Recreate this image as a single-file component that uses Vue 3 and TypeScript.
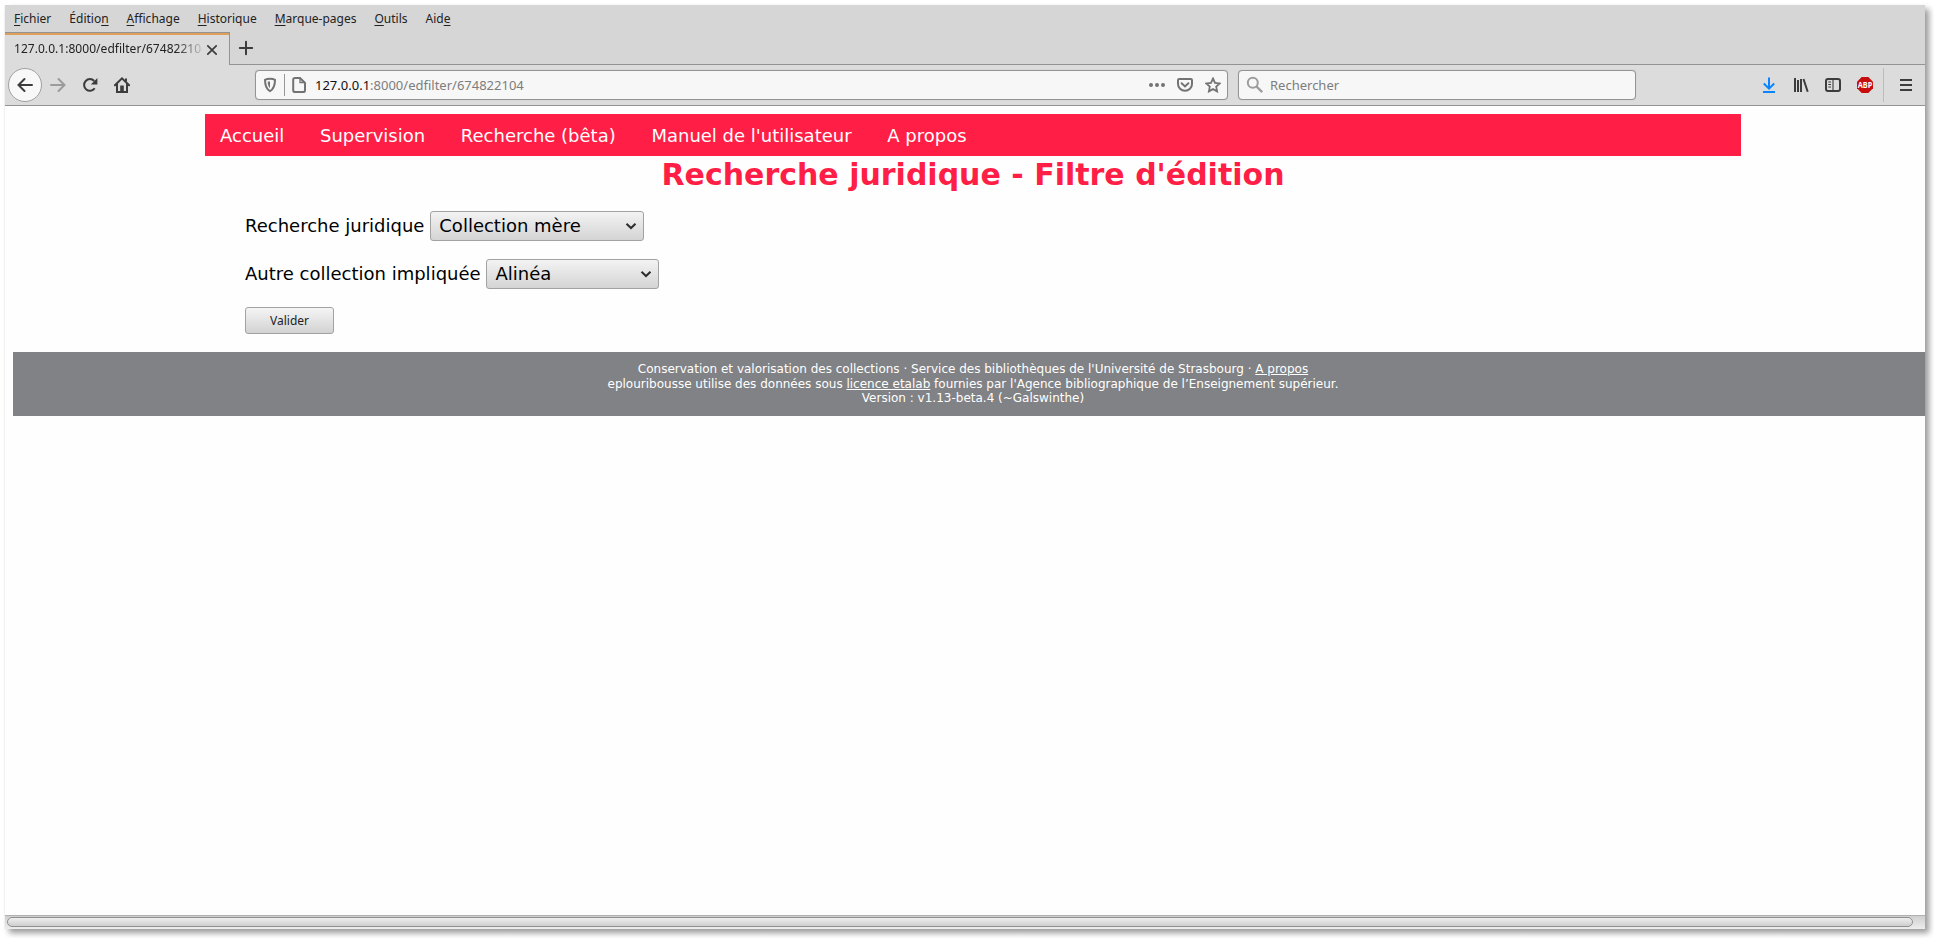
<script setup lang="ts">
interface MenuEntry { before: string; key: string; after: string }

const menus: MenuEntry[] = [
  { before: '', key: 'F', after: 'ichier' },
  { before: 'Éditio', key: 'n', after: '' },
  { before: '', key: 'A', after: 'ffichage' },
  { before: '', key: 'H', after: 'istorique' },
  { before: '', key: 'M', after: 'arque-pages' },
  { before: '', key: 'O', after: 'utils' },
  { before: 'Aid', key: 'e', after: '' },
]
const links: string[] = ['Accueil', 'Supervision', 'Recherche (bêta)', "Manuel de l'utilisateur", 'A propos']
</script>

<template>
  <div class="desktop">
    <div class="window">
      <div class="menubar">
        <span v-for="m in menus" :key="m.key" class="menu">{{ m.before }}<u>{{ m.key }}</u>{{ m.after }}</span>
      </div>
      <div class="tabs">
        <div class="tab">
          <span class="tab-title">127.0.0.1:8000/edfilter/674822104</span>
          <svg class="close" width="16" height="16" viewBox="0 0 16 16"><path d="M3.8 3.8l8.4 8.4M12.2 3.8l-8.4 8.4" stroke-linecap="round" /></svg>
        </div>
        <div class="tab-rest">
          <svg width="16" height="16" viewBox="0 0 16 16"><path d="M8 1.8v12.4M1.8 8h12.4" stroke-linecap="round" /></svg>
        </div>
      </div>
      <div class="toolbar">
        <div class="back"><svg width="16" height="16" viewBox="0 0 16 16"><path d="M15 8H1.500M7.500 2L1.500 8l6 6" stroke-linecap="round" /></svg></div>
        <svg class="ic forward" width="16" height="16" viewBox="0 0 16 16"><path d="M1 8h13.500M8.500 2l6 6-6 6" stroke-linecap="round" /></svg>
        <svg class="ic reload" width="16" height="16" viewBox="0 0 16 16"><path d="M12.700 11.200A5.800 5.800 0 1 1 12.200 4" /><path d="M15.400 1v6.500H8.900z" class="solid" /></svg>
        <svg class="ic home" width="16" height="16" viewBox="0 0 16 16"><path d="M.9 8.300L8 1.400l7.100 6.900" stroke-linecap="round" /><path d="M3 7v8h10V7" /><path d="M12 1.500v3" /><path d="M6.200 15V8.500h3.600V15z" class="solid" /></svg>
        <div class="url">
          <svg class="shield" width="16" height="16" viewBox="0 0 16 16"><path d="M8 1.800c2 0 3.700.3 5 1 0 5.200-.9 9.200-5 11.400C3.900 12 3 8 3 2.800c1.300-.7 3-1 5-1z" /><path d="M8 4.400c-1 0-1.700.1-2.300.3.1 3.200.7 5 2.300 6.300z" class="solid" /></svg>
          <i class="sep"></i>
          <svg class="page-ic" width="16" height="16" viewBox="0 0 16 16"><path d="M4 1h5l5 5v7.200c0 1-.8 1.800-1.800 1.800H4c-1 0-1.800-.8-1.800-1.800V2.800C2.200 1.800 3 1 4 1z" /><path d="M9 1v4.500h4.800" stroke-width="1.300" /></svg>
          <span class="address"><b>127.0.0.1</b>:8000/edfilter/674822104</span>
          <svg class="dots" width="16" height="16" viewBox="0 0 16 16"><circle cx="2" cy="8" r="2" /><circle cx="8" cy="8" r="2" /><circle cx="14" cy="8" r="2" /></svg>
          <svg class="pocket" width="16" height="16" viewBox="0 0 16 16"><path d="M2.200 2h11.600c.7 0 1.200.5 1.200 1.200V7a7 6.800 0 0 1-14 0V3.200C1 2.500 1.500 2 2.200 2z" /><path d="M4.600 6.200L8 9.400l3.400-3.200" stroke-linecap="round" /></svg>
          <svg class="star" width="16" height="16" viewBox="0 0 16 16"><path d="M8 1.500l2 4.300 4.700.6-3.500 3.200.9 4.800L8 12.100l-4.100 2.300.9-4.800L1.300 6.400 6 5.800z" /></svg>
        </div>
        <div class="search">
          <svg width="18" height="18" viewBox="0 0 18 18"><circle cx="6.800" cy="6.800" r="5" /><path d="M10.500 10.500l5.700 5.700" stroke-width="2.400" /></svg>
          <span>Rechercher</span>
        </div>
        <div class="tools">
          <svg class="download" width="16" height="16" viewBox="0 0 16 16"><path d="M8 .500v11M2.800 6.500L8 11.700l5.200-5.200M2 15h12" /></svg>
          <svg width="16" height="16" viewBox="0 0 16 16"><path d="M2 1v14M5 3v12M8 2v13M10.500 2l4.200 12.800" /></svg>
          <svg width="16" height="16" viewBox="0 0 16 16"><rect x="1" y="2" width="14" height="12" rx="2" /><path d="M8 2v12M3.300 5H6M3.300 7.500H6M3.300 10H6" stroke-width="1.100" /></svg>
          <svg class="abp" width="16" height="16" viewBox="0 0 16 16"><path d="M4.700 0h6.600L16 4.700v6.600L11.300 16H4.700L0 11.300V4.700z" /><text x="8" y="11" text-anchor="middle" textLength="14.400" lengthAdjust="spacingAndGlyphs">ABP</text></svg>
          <i class="divider"></i>
          <svg width="16" height="16" viewBox="0 0 16 16"><path d="M2 3h12M2 8h12M2 13h12" /></svg>
        </div>
      </div>
      <div class="viewport">
        <div class="page">
          <nav><a v-for="l in links" :key="l">{{ l }}</a></nav>
          <h1>Recherche juridique - Filtre d'édition</h1>
          <form>
            <div class="row">
              <label>Recherche juridique</label>
              <div class="select first">Collection mère<svg width="12" height="8" viewBox="0 0 12 8"><path d="M1.500 1.700L6 6l4.500-4.300" /></svg></div>
            </div>
            <div class="row">
              <label>Autre collection impliquée</label>
              <div class="select second">Alinéa<svg width="12" height="8" viewBox="0 0 12 8"><path d="M1.500 1.700L6 6l4.500-4.300" /></svg></div>
            </div>
            <button type="button">Valider</button>
          </form>
          <footer>
            <div>Conservation et valorisation des collections · Service des bibliothèques de l'Université de Strasbourg · <u>A propos</u></div>
            <div>eplouribousse utilise des données sous <u>licence etalab</u> fournies par l'Agence bibliographique de l’Enseignement supérieur.</div>
            <div class="version">Version : v1.13-beta.4 (~Galswinthe)</div>
          </footer>
        </div>
      </div>
      <div class="scroll"><div class="thumb"></div></div>
    </div>
  </div>
</template>

<style>
body { margin: 0; background: #fff; }
</style>

<style scoped>
* { box-sizing: border-box; }
svg { flex: none; fill: none; stroke: #3c3c3c; stroke-width: 2; }
.solid { fill: #3c3c3c; stroke: none; }
.desktop { height: 938px; padding: 5px 0 0 5px; overflow: hidden; background: #fff; }
.window { width: 1920px; height: 924px; display: flex; flex-direction: column; background: #fefefe; box-shadow: 4px 4px 6px rgba(0, 0, 0, .4), -1px 0 0 #f8f8f8; font-family: "Noto Sans", sans-serif; font-size: 12px; color: #222; }
.menubar { height: 27px; background: #d6d6d6; display: flex; padding-left: 9px; gap: 18px; line-height: 27px; }
.menu { white-space: nowrap; }
.menu u { text-underline-offset: 2px; }
.tabs { height: 33px; display: flex; background: #d6d6d6; }
.tab { width: 225px; border-top: 1px solid #939393; border-right: 1px solid #939393; background: #dcdcdc; box-shadow: inset 0 2px #dfa05c; display: flex; align-items: center; padding: 0 9px; }
.tab-title { width: 188px; font-size: 12px; letter-spacing: .04px; padding-bottom: 1px; white-space: nowrap; overflow: hidden; mask-image: linear-gradient(to right, #000 162px, transparent 192px); }
.close { margin: 1px 0 0 2px; }
.tab .close { stroke-width: 1.7; }
.tab-rest { flex: 1; border-bottom: 1px solid #939393; display: flex; align-items: center; padding-left: 8px; }
.toolbar { height: 41px; background: #dcdcdc; border-bottom: 1px solid #939393; display: flex; align-items: center; padding-left: 3px; }
.back { width: 34px; height: 34px; border-radius: 50%; border: 1px solid #a0a0a0; background: #f8f8f8; display: flex; align-items: center; justify-content: center; }
.forward { margin-left: 8px; stroke: #9b9b9b; }
.reload { margin-left: 16px; }
.home { margin-left: 16px; }
.url, .search { height: 30px; border: 1px solid #949494; border-radius: 4px; background: #f7f7f7; display: flex; align-items: center; font-size: 13px; color: #7d7d7d; box-shadow: 0 0 1px #aaa; }
.url { width: 973px; margin-left: 125px; padding-left: 6px; }
.url svg { stroke: #737373; }
.url .solid { fill: #737373; stroke: none; }
.sep { width: 1px; height: 22px; background: #989898; margin: 0 6px; }
.address { margin-left: 8px; flex: 1; }
.address b { font-weight: 400; color: #111; }
.url .dots { fill: #737373; stroke: none; }
.pocket { margin-left: 12px; }
.star { margin: 0 6px 0 12px; }
.url .star { stroke-width: 1.8; }
.search { width: 398px; margin-left: 10px; padding-left: 7px; }
.search svg { stroke: #9c9c9c; }
.search span { margin-left: 6px; }
.tools { flex: 1; display: flex; align-items: center; justify-content: flex-end; gap: 16px; padding-right: 11px; }
.tools .download { stroke: #0a84ff; }
.tools .abp { fill: #c70d0d; stroke: none; }
.abp text { fill: #fff; font: bold 8.200px "Noto Sans", sans-serif; }
.divider { width: 1px; height: 34px; background: #bcbcbc; margin: 0 -2px 0 -6px; }
.viewport { flex: 1; min-height: 0; overflow: hidden; padding: 8px 0 0 8px; }
.page { width: 1920px; font-family: "DejaVu Sans", sans-serif; }
nav { width: 1536px; height: 42px; margin: 0 auto; background: #ff1e45; color: #fff; display: flex; align-items: center; padding-left: 15px; gap: 35.700px; font-size: 18px; }
h1 { margin: 0; height: 36px; line-height: 38px; text-align: center; color: #ff1e45; font-size: 30px; font-weight: 700; }
form { padding: 19px 0 0 232px; font-size: 18px; color: #000; }
.row { height: 30px; margin-bottom: 18px; display: flex; align-items: center; }
.row label { padding-bottom: 2px; margin-right: 5.400px; }
.select { height: 30px; border: 1px solid #a2a2a2; border-radius: 3px; background: linear-gradient(#f3f3f3, #d4d4d4); display: flex; align-items: center; justify-content: space-between; padding: 0 6px 2px 8.500px; }
.select svg { margin-top: 2px; stroke: #2d2d2d; }
.first { width: 214px; }
.second { width: 173px; }
button { display: block; width: 89px; height: 27px; border: 1px solid #a2a2a2; border-radius: 3px; background: linear-gradient(#f5f5f5, #d2d2d2); font: 12px "Noto Sans", sans-serif; color: #222; padding: 0; }
footer { margin-top: 18px; height: 64px; background: #818285; color: #fff; text-align: center; font-size: 12px; line-height: 15px; padding-top: 10px; }
.version { line-height: 13px; }
.scroll { height: 14px; border-top: 1px solid #b0b0b0; background: linear-gradient(#cfcfcf, #ededed); padding: 1px 12px 2px 2px; }
.thumb { height: 10px; border: 1px solid #909090; border-radius: 5px; background: linear-gradient(#eee, #cfcfcf); }
</style>
